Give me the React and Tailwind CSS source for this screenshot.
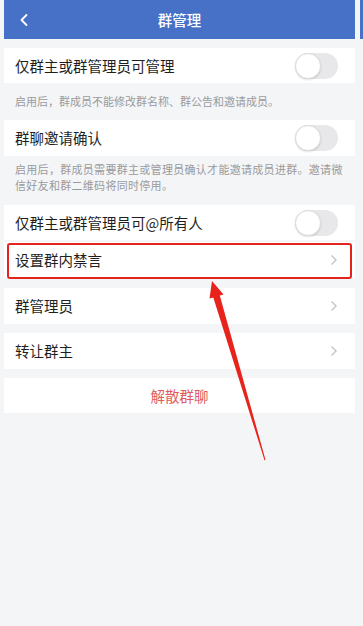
import { ChevronLeft } from 'lucide-react'

const font = { fontFamily: '"Noto Sans CJK SC", "Noto Sans", sans-serif' }

function Toggle() {
  return (
    <div className="relative w-[43px] h-[26px] rounded-full bg-[#e8e8ea]">
      <div className="absolute left-0 top-0 size-[26px] rounded-full bg-white border border-[#dcdcdc] shadow-[0_1px_2px_rgba(0,0,0,0.12)]" />
    </div>
  )
}

function Chevron() {
  return (
    <svg width="8" height="12" viewBox="0 0 8 12" className="mr-[17px]">
      <polyline points="1.5,1.5 6,6 1.5,10.5" fill="none" stroke="#c4c4c6" strokeWidth="1.4" />
    </svg>
  )
}

function SwitchRow({ label, h = 'h-[35px]' }) {
  return (
    <div className={`${h} bg-white flex items-center justify-between pl-[11px] pr-[17px]`}>
      <span className="text-[14.5px] text-[#1f1f1f]">{label}</span>
      <Toggle />
    </div>
  )
}

function LinkRow({ label, boxed }) {
  return (
    <div className="relative h-[36px] bg-white flex items-center justify-between pl-[11px]">
      <span className="text-[14.5px] text-[#1f1f1f]">{label}</span>
      <Chevron />
      {boxed && (
        <div className="absolute left-[3px] right-[3px] top-[1px] bottom-[-1px] border-[2.5px] border-[#e3241c] rounded-[3px]" />
      )}
    </div>
  )
}

export default function App() {
  return (
    <div className="relative w-[363px] h-[626px] bg-[#f4f5f7] overflow-hidden flex" style={font}>
      <div className="w-[351px] ml-[4px] flex flex-col">
        <div className="h-[39px] bg-[#4671c6] flex items-center relative">
          <ChevronLeft className="absolute left-[10px] text-white" size={20} strokeWidth={2.2} />
          <div className="flex-1 text-center text-white text-[14.5px] font-medium">群管理</div>
        </div>

        <div className="mt-[9px]">
          <SwitchRow label="仅群主或群管理员可管理" />
        </div>
        <div className="h-[37px] flex items-center pl-[11px] text-[11px] text-[#9a9a9c]">
          启用后，群成员不能修改群名称、群公告和邀请成员。
        </div>

        <SwitchRow label="群聊邀请确认" h="h-[36px]" />
        <div className="h-[49px] pl-[11px] pt-[5px] text-[11px] leading-[16px] tracking-[0.3px] text-[#9a9a9c]">
          <div>启用后，群成员需要群主或管理员确认才能邀请成员进群。邀请微</div>
          <div>信好友和群二维码将同时停用。</div>
        </div>

        <SwitchRow label="仅群主或群管理员可@所有人" />
        <div className="mt-[2px]">
          <LinkRow label="设置群内禁言" boxed />
        </div>
        <div className="mt-[10px]">
          <LinkRow label="群管理员" />
        </div>
        <div className="mt-[9px]">
          <LinkRow label="转让群主" />
        </div>
        <div className="mt-[9px] h-[35px] bg-white flex items-center justify-center text-[14.5px] text-[#e05c5c]">
          解散群聊
        </div>
      </div>

      <div className="ml-[5px] flex-1 flex flex-col">
        <div className="h-[39px] bg-[#4671c6]" />
      </div>

      <svg className="absolute inset-0 pointer-events-none" width="363" height="626" viewBox="0 0 363 626">
        <polygon
          points="212,281 223.5,294.5 219.8,295.5 265.5,460 264.5,460.2 213.3,297.5 209.5,298.5"
          fill="#e8231b"
        />
      </svg>
    </div>
  )
}
